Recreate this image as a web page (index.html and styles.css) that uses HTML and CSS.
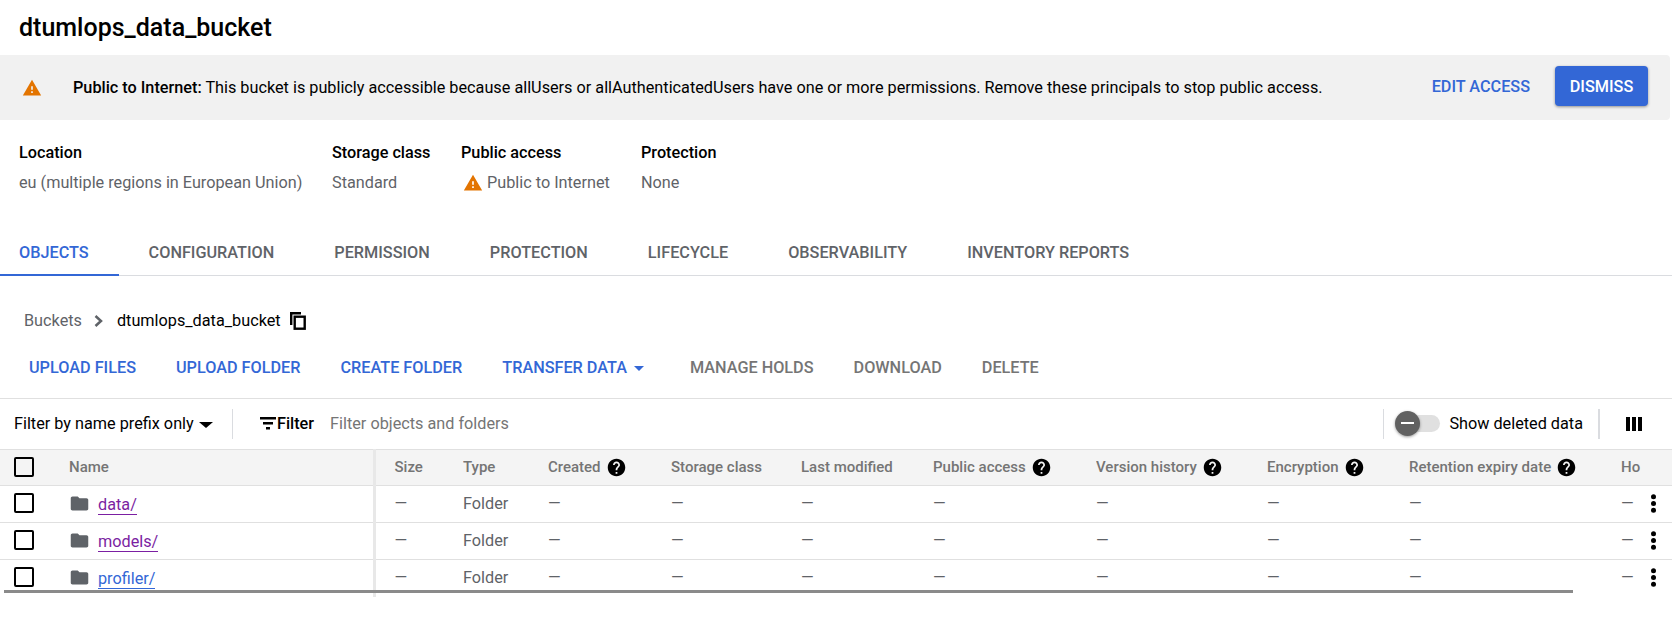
FILE: index.html
```html
<!DOCTYPE html>
<html lang="en">
<head>
  <meta charset="UTF-8">
  <title>dtumlops_data_bucket</title>
  <link rel="stylesheet" href="styles.css">
</head>
<body>
  <svg class="icon-defs" width="0" height="0">
    <symbol id="warn" viewBox="0 0 24 24"><path d="M1 21h22L12 2 1 21zm12-3h-2v-2h2v2zm0-4h-2v-4h2v4z"/></symbol>
    <symbol id="help" viewBox="0 0 24 24"><path d="M12 2C6.48 2 2 6.48 2 12s4.480 10 10 10 10-4.480 10-10S17.520 2 12 2zm1 17h-2v-2h2v2zm2.070-7.750l-.9.920C13.450 12.900 13 13.500 13 15h-2v-.5c0-1.100.45-2.100 1.170-2.830l1.240-1.260c.37-.36.590-.86.590-1.410 0-1.100-.9-2-2-2s-2 .9-2 2H8c0-2.210 1.790-4 4-4s4 1.790 4 4c0 .88-.36 1.680-.93 2.250z"/></symbol>
    <symbol id="folder" viewBox="0 0 24 24"><path d="M10 4H4c-1.100 0-2 .9-2 2v12c0 1.100.9 2 2 2h16c1.100 0 2-.9 2-2V8c0-1.100-.9-2-2-2h-8l-2-2z"/></symbol>
    <symbol id="more" viewBox="0 0 24 24"><circle cx="12" cy="5.500" r="2.400"/><circle cx="12" cy="12" r="2.400"/><circle cx="12" cy="18.500" r="2.400"/></symbol>
  </svg>

  <h1 class="page-title">dtumlops_data_bucket</h1>

  <div class="banner">
    <svg class="banner-icon"><use href="#warn"/></svg>
    <p class="banner-text"><b>Public to Internet:</b> This bucket is publicly accessible because allUsers or allAuthenticatedUsers have one or more permissions. Remove these principals to stop public access.</p>
    <a class="banner-link">EDIT ACCESS</a>
    <button class="banner-button">DISMISS</button>
  </div>

  <div class="summary">
    <div class="summary-item summary-location">
      <div class="summary-label">Location</div>
      <div class="summary-value">eu (multiple regions in European Union)</div>
    </div>
    <div class="summary-item summary-class">
      <div class="summary-label">Storage class</div>
      <div class="summary-value">Standard</div>
    </div>
    <div class="summary-item summary-access">
      <div class="summary-label">Public access</div>
      <div class="summary-value"><svg class="summary-icon"><use href="#warn"/></svg>Public to Internet</div>
    </div>
    <div class="summary-item">
      <div class="summary-label">Protection</div>
      <div class="summary-value">None</div>
    </div>
  </div>

  <nav class="tabs">
    <a class="tab tab-active">OBJECTS</a>
    <a class="tab">CONFIGURATION</a>
    <a class="tab">PERMISSION</a>
    <a class="tab">PROTECTION</a>
    <a class="tab">LIFECYCLE</a>
    <a class="tab">OBSERVABILITY</a>
    <a class="tab">INVENTORY REPORTS</a>
  </nav>

  <div class="crumbs">
    <span class="crumb-root">Buckets</span>
    <svg class="crumb-chevron" viewBox="0 0 9 12"><path d="M1.500 1 7 6 1.500 11"/></svg>
    <span class="crumb-current">dtumlops_data_bucket</span>
    <svg class="crumb-copy" viewBox="0 0 16 18"><path d="M1.200 13V1.200H11"/><rect x="4.700" y="4.700" width="10" height="12"/></svg>
  </div>

  <div class="actions">
    <a class="action">UPLOAD FILES</a>
    <a class="action">UPLOAD FOLDER</a>
    <a class="action">CREATE FOLDER</a>
    <a class="action action-menu">TRANSFER DATA<span class="caret caret-blue"></span></a>
    <a class="action action-off">MANAGE HOLDS</a>
    <a class="action action-off">DOWNLOAD</a>
    <a class="action action-off">DELETE</a>
  </div>

  <div class="filter-bar">
    <span class="filter-mode">Filter by name prefix only<span class="caret caret-black"></span></span>
    <span class="filter-divider"></span>
    <svg class="filter-icon" viewBox="0 0 16 13"><path d="M0 0h16v2.600H0zM3 5h10v2.600H3zM6 10h4v2.600H6z"/></svg>
    <span class="filter-label">Filter</span>
    <span class="filter-placeholder">Filter objects and folders</span>
    <span class="filter-divider"></span>
    <span class="toggle"><span class="toggle-track"></span><span class="toggle-thumb"></span></span>
    <span class="toggle-label">Show deleted data</span>
    <span class="filter-divider filter-divider-thick"></span>
    <svg class="columns-icon" viewBox="0 0 16 16"><path d="M0 1h4v14H0zM6 1h4v14H6zM12 1h4v14h-4z"/></svg>
  </div>

  <div class="table-wrap">
    <table class="objects">
      <colgroup>
        <col class="col-check"><col class="col-name"><col class="col-size"><col class="col-type"><col class="col-created"><col class="col-storage"><col class="col-modified"><col class="col-public"><col class="col-version"><col class="col-encryption"><col class="col-retention"><col class="col-hold">
      </colgroup>
      <thead>
        <tr>
          <th class="cell-check"><span class="checkbox"></span></th>
          <th class="cell-name">Name</th>
          <th class="cell-size">Size</th>
          <th>Type</th>
          <th>Created<svg class="help"><use href="#help"/></svg></th>
          <th>Storage class</th>
          <th>Last modified</th>
          <th>Public access<svg class="help"><use href="#help"/></svg></th>
          <th>Version history<svg class="help"><use href="#help"/></svg></th>
          <th>Encryption<svg class="help"><use href="#help"/></svg></th>
          <th>Retention expiry date<svg class="help"><use href="#help"/></svg></th>
          <th>Ho</th>
        </tr>
      </thead>
      <tbody>
        <tr>
          <td class="cell-check"><span class="checkbox"></span></td>
          <td class="cell-name"><svg class="folder"><use href="#folder"/></svg><a class="object-link object-visited">data/</a></td>
          <td class="cell-size">—</td><td>Folder</td><td>—</td><td>—</td><td>—</td><td>—</td><td>—</td><td>—</td><td>—</td>
          <td class="cell-hold">—<svg class="more"><use href="#more"/></svg></td>
        </tr>
        <tr>
          <td class="cell-check"><span class="checkbox"></span></td>
          <td class="cell-name"><svg class="folder"><use href="#folder"/></svg><a class="object-link object-visited">models/</a></td>
          <td class="cell-size">—</td><td>Folder</td><td>—</td><td>—</td><td>—</td><td>—</td><td>—</td><td>—</td><td>—</td>
          <td class="cell-hold">—<svg class="more"><use href="#more"/></svg></td>
        </tr>
        <tr>
          <td class="cell-check"><span class="checkbox"></span></td>
          <td class="cell-name"><svg class="folder"><use href="#folder"/></svg><a class="object-link">profiler/</a></td>
          <td class="cell-size">—</td><td>Folder</td><td>—</td><td>—</td><td>—</td><td>—</td><td>—</td><td>—</td><td>—</td>
          <td class="cell-hold">—<svg class="more"><use href="#more"/></svg></td>
        </tr>
      </tbody>
    </table>
    <div class="scroll-thumb"></div>
  </div>
</body>
</html>
```

FILE: styles.css
```css
html, body {
  height: 623px;
  overflow: hidden;
}

body {
  margin: 0;
  background: #fff;
  color: #202124;
  font-family: Roboto, sans-serif;
  font-size: 16.24px;
}

.icon-defs {
  position: absolute;
}

.page-title {
  margin: 0;
  height: 55px;
  padding-left: 19px;
  font-size: 25px;
  font-weight: 500;
  line-height: 56px;
  color: #000;
}

/* banner */
.banner {
  display: flex;
  align-items: center;
  height: 65px;
  margin-right: 2px;
  padding: 0 22px 0 22px;
  background: #f1f1f1;
  border-radius: 0 4px 4px 0;
}

.banner-icon {
  width: 20px;
  height: 20px;
  fill: #e37400;
  margin-right: 31px;
  flex: none;
}

.banner-text {
  margin: 0;
  flex: 1;
  color: #000;
}

.banner-text b {
  font-weight: 500;
}

.banner-link {
  color: #3367d6;
  font-weight: 500;
  margin: 0 25px 2px 0;
}

.banner-button {
  width: 93px;
  height: 40px;
  margin-bottom: 3px;
  border: 0;
  border-radius: 4px;
  background: #3367d6;
  color: #fff;
  font: 500 16.24px Roboto, sans-serif;
  box-shadow: 0 1px 3px rgba(0, 0, 0, 0.4);
}

/* summary */
.summary {
  display: flex;
  height: 110px;
  box-sizing: border-box;
  padding: 23px 0 0 19px;
}

.summary-item {
  margin-right: 30px;
}

.summary-location {
  width: 283px;
}

.summary-class {
  width: 99px;
}

.summary-access {
  width: 150px;
}

.summary-label {
  font-weight: 500;
  color: #000;
  line-height: 20px;
  margin-bottom: 10px;
}

.summary-value {
  color: #5f6368;
  line-height: 20px;
  display: flex;
  align-items: center;
  white-space: nowrap;
}

.summary-icon {
  width: 20px;
  height: 20px;
  fill: #e37400;
  margin: 0 4px 0 2px;
}

/* tabs */
.tabs {
  display: flex;
  height: 46px;
  box-sizing: border-box;
  border-bottom: 1px solid #dadce0;
}

.tab {
  padding: 0 30px;
  line-height: 46px;
  color: #5f6368;
  font-weight: 500;
}

.tab:first-child {
  padding-left: 19px;
}

.tab-active {
  color: #3367d6;
  height: 46px;
  box-sizing: border-box;
  border-bottom: 2px solid #3367d6;
}

/* breadcrumb */
.crumbs {
  display: flex;
  align-items: center;
  height: 45px;
  margin-top: 22px;
  padding-left: 24px;
}

.crumb-root {
  color: #5f6368;
}

.crumb-chevron {
  width: 9px;
  height: 12px;
  margin: 0 14px 0 12px;
  fill: none;
  stroke: #5f6368;
  stroke-width: 2.5;
}

.crumb-current {
  color: #000;
}

.crumb-copy {
  width: 16px;
  height: 18px;
  margin-left: 9px;
  fill: none;
  stroke: #000;
  stroke-width: 2.4;
}

/* actions */
.actions {
  display: flex;
  align-items: center;
  gap: 40px;
  height: 56px;
  padding: 0 0 6px 29px;
  box-sizing: border-box;
  border-bottom: 1px solid #e0e0e0;
}

.action {
  color: #3367d6;
  font-weight: 500;
}

.action-menu {
  margin-right: 6px;
}

.action-off {
  color: #757575;
}

.caret {
  display: inline-block;
  width: 0;
  height: 0;
  margin-left: 7px;
  vertical-align: middle;
  border-left: 5px solid transparent;
  border-right: 5px solid transparent;
  border-top: 5px solid #000;
}

.caret-blue {
  border-top-color: #3367d6;
}

.caret-black {
  margin-left: 5px;
  border-left-width: 7px;
  border-right-width: 7px;
  border-top-width: 6px;
}

/* filter bar */
.filter-bar {
  display: flex;
  align-items: center;
  height: 50px;
  box-sizing: border-box;
  padding: 0 30px 1px 14px;
  color: #000;
}

.filter-mode {
  width: 218px;
  flex: none;
}

.filter-divider {
  width: 1px;
  height: 30px;
  background: #dadce0;
  flex: none;
}

.filter-icon {
  width: 16px;
  height: 13px;
  margin-left: 27px;
  flex: none;
}

.filter-label {
  font-weight: 500;
  margin: 0 16px 0 1px;
}

.filter-placeholder {
  color: #757575;
  flex: 1;
}

.toggle {
  position: relative;
  width: 45px;
  height: 28px;
  margin: 0 9px 0 11px;
  flex: none;
}

.toggle-track {
  position: absolute;
  left: 5px;
  top: 5px;
  width: 40px;
  height: 17px;
  border-radius: 9px;
  background: #e0e0e0;
}

.toggle-thumb {
  position: absolute;
  left: 0;
  top: 1px;
  width: 25px;
  height: 25px;
  border-radius: 50%;
  background: #616161;
  box-shadow: 0 1px 3px rgba(0, 0, 0, 0.4);
}

.toggle-thumb::after {
  content: "";
  position: absolute;
  left: 6px;
  top: 11px;
  width: 13px;
  height: 2px;
  background: #fff;
}

.filter-divider-thick {
  width: 2px;
  margin-left: 15px;
}

.columns-icon {
  width: 16px;
  height: 16px;
  margin-left: 26px;
  flex: none;
}

/* table */
.table-wrap {
  position: relative;
}

.objects {
  width: 1672px;
  table-layout: fixed;
  border-collapse: collapse;
}

.col-check { width: 69px; }
.col-name { width: 305px; }
.col-size { width: 89px; }
.col-type { width: 85px; }
.col-created { width: 123px; }
.col-storage { width: 130px; }
.col-modified { width: 132px; }
.col-public { width: 163px; }
.col-version { width: 171px; }
.col-encryption { width: 142px; }
.col-retention { width: 212px; }
.col-hold { width: 51px; }

.objects th,
.objects td {
  height: 37px;
  padding: 0 0 2px;
  box-sizing: border-box;
  text-align: left;
  border-bottom: 1px solid #e0e0e0;
  white-space: nowrap;
  overflow: hidden;
}

.objects th {
  height: 36px;
  background: #f4f4f4;
  color: #757575;
  font-weight: 500;
  font-size: 15px;
  border-top: 1px solid #e0e0e0;
}

.objects td {
  color: #5f6368;
}

.objects tbody tr:last-child td {
  border-bottom: 0;
}

.objects .cell-name {
  border-right: 3px solid #e8e8e8;
}

.objects .cell-size {
  padding-left: 19px;
}

.objects .cell-check {
  padding-left: 14px;
}

.checkbox {
  display: block;
  width: 16px;
  height: 16px;
  border: 2px solid #000;
  border-radius: 2px;
}

/* negative margins keep the icon from growing the header line */
.help {
  width: 21px;
  height: 21px;
  margin: -4px 0 -4px 5px;
  vertical-align: -2px;
}

.folder {
  width: 21px;
  height: 21px;
  fill: #5f6368;
  margin-right: 8px;
  vertical-align: -4px;
}

.object-link {
  color: #3367d6;
  border-bottom: 1px solid currentColor;
}

.object-visited {
  color: #7b1fa2;
}

.more {
  width: 25px;
  height: 25px;
  margin-left: 7px;
  vertical-align: -7px;
}

.scroll-thumb {
  position: absolute;
  left: 4px;
  top: 141px;
  width: 1569px;
  height: 3px;
  background: #8a8a8a;
}
```
